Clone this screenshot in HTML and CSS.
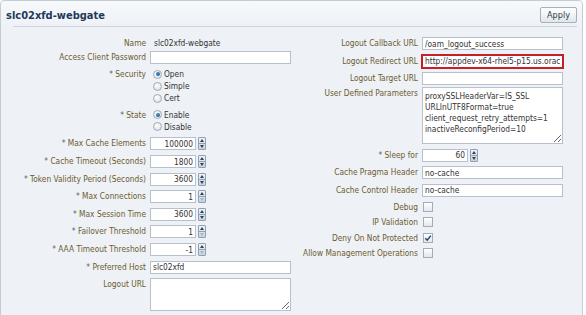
FILE: index.html
```html
<!DOCTYPE html>
<html lang="en">
<head>
  <meta charset="UTF-8" />
  <title>slc02xfd-webgate</title>
  <link rel="stylesheet" href="styles.css">
</head>
<body>

  <div class="panel">
    <div class="panel-head">
      <h1>slc02xfd-webgate</h1>
      <button class="btn">Apply</button>
    </div>
    <div class="head-rule"></div>

    <div class="panel-body">

      <!-- left column -->
      <div class="form">
        <label class="lbl short">Name</label>
        <div class="static short">slc02xfd-webgate</div>

        <label class="lbl">Access Client Password</label>
        <div><input class="txt" type="text"></div>

        <label class="lbl grp"><span class="req">*</span> Security</label>
        <div class="radios">
          <div class="opt"><span class="radio on"></span>Open</div>
          <div class="opt"><span class="radio"></span>Simple</div>
          <div class="opt"><span class="radio"></span>Cert</div>
        </div>

        <label class="lbl grp"><span class="req">*</span> State</label>
        <div class="radios">
          <div class="opt"><span class="radio on"></span>Enable</div>
          <div class="opt"><span class="radio"></span>Disable</div>
        </div>

        <label class="lbl"><span class="req">*</span> Max Cache Elements</label>
        <div class="num"><input class="txt n" type="text" value="100000"><span class="spin"><span class="up"></span><span class="dn"></span></span></div>

        <label class="lbl"><span class="req">*</span> Cache Timeout (Seconds)</label>
        <div class="num"><input class="txt n" type="text" value="1800"><span class="spin"><span class="up"></span><span class="dn"></span></span></div>

        <label class="lbl"><span class="req">*</span> Token Validity Period (Seconds)</label>
        <div class="num"><input class="txt n" type="text" value="3600"><span class="spin"><span class="up"></span><span class="dn"></span></span></div>

        <label class="lbl"><span class="req">*</span> Max Connections</label>
        <div class="num"><input class="txt n" type="text" value="1"><span class="spin"><span class="up"></span><span class="dn off"></span></span></div>

        <label class="lbl"><span class="req">*</span> Max Session Time</label>
        <div class="num"><input class="txt n" type="text" value="3600"><span class="spin"><span class="up"></span><span class="dn"></span></span></div>

        <label class="lbl"><span class="req">*</span> Failover Threshold</label>
        <div class="num"><input class="txt n" type="text" value="1"><span class="spin"><span class="up"></span><span class="dn off"></span></span></div>

        <label class="lbl"><span class="req">*</span> AAA Timeout Threshold</label>
        <div class="num"><input class="txt n" type="text" value="-1"><span class="spin"><span class="up"></span><span class="dn off"></span></span></div>

        <label class="lbl"><span class="req">*</span> Preferred Host</label>
        <div><input class="txt" type="text" value="slc02xfd"></div>

        <label class="lbl grp">Logout URL</label>
        <div><textarea class="area small"></textarea></div>
      </div>

      <!-- right column -->
      <div class="form right">
        <label class="lbl">Logout Callback URL</label>
        <div><input class="txt" type="text" value="/oam_logout_success"></div>

        <label class="lbl">Logout Redirect URL</label>
        <div><input class="txt err" type="text" value="http://appdev-x64-rhel5-p15.us.oracle.com:7777/oam/server/logout"></div>

        <label class="lbl">Logout Target URL</label>
        <div><input class="txt" type="text"></div>

        <label class="lbl grp tight">User Defined Parameters</label>
        <div class="tight"><textarea class="area big">proxySSLHeaderVar=IS_SSL
URLInUTF8Format=true
client_request_retry_attempts=1
inactiveReconfigPeriod=10</textarea></div>

        <label class="lbl"><span class="req">*</span> Sleep for</label>
        <div class="num"><input class="txt n" type="text" value="60"><span class="spin"><span class="up"></span><span class="dn"></span></span></div>

        <label class="lbl">Cache Pragma Header</label>
        <div><input class="txt" type="text" value="no-cache"></div>

        <label class="lbl">Cache Control Header</label>
        <div><input class="txt" type="text" value="no-cache"></div>

        <label class="lbl chk-row">Debug</label>
        <div class="chk-row"><span class="chk"></span></div>

        <label class="lbl chk-row">IP Validation</label>
        <div class="chk-row"><span class="chk"></span></div>

        <label class="lbl chk-row">Deny On Not Protected</label>
        <div class="chk-row"><span class="chk">
          <svg width="8" height="8" viewBox="0 0 8 8"><path d="M1.3 4.2 L3.2 6.2 L6.9 1.6" stroke="#24476f" stroke-width="1.5" fill="none"/></svg>
        </span></div>

        <label class="lbl chk-row">Allow Management Operations</label>
        <div class="chk-row"><span class="chk"></span></div>
      </div>

    </div>
  </div>

</body>
</html>
```

FILE: styles.css
```css
* { box-sizing: border-box; }
body {
  margin: 0;
  background: #fff;
  color: #333;
  font-family: "DejaVu Sans Condensed", "DejaVu Sans", "Liberation Sans", sans-serif;
  font-size: 8.3px;
  overflow: hidden;
}

/* panel frame */
.panel {
  width: 583px; min-height: 330px;
  border: 1px solid #c4cdd6;
  border-radius: 4px 4px 0 0;
  background: #eef2f6;
}
.panel-head {
  height: 25px;
  padding: 3px 5px 0 5px;
  display: flex; align-items: center; justify-content: space-between;
  background: linear-gradient(#f7f9fb, #eef2f6);
  border-radius: 4px 4px 0 0;
}
h1 {
  margin: 0;
  font-size: 11px; font-weight: bold;
  color: #1e3a5a;
}
.btn {
  width: 37px; height: 16px; padding: 0;
  font-family: inherit; font-size: 9px; color: #2d3b4b;
  border: 1px solid #a7b1bc; border-radius: 2px;
  background: linear-gradient(#ffffff, #e2e7ec);
}
.head-rule {
  height: 1px; margin: 0 5px 0 12px;
  background: #cdd4db;
}

/* form columns */
.panel-body {
  display: flex; align-items: flex-start; gap: 9px;
  padding: 9.5px 0 0 9px;
}
.form {
  display: grid;
  grid-template-columns: 136px 141px;
  column-gap: 4px; row-gap: 4.6px;
  align-items: start; align-content: start;
}
.form.right {
  grid-template-columns: 118px 141px;
  padding-top: 0.8px;
}
.lbl {
  text-align: right; white-space: nowrap;
  color: #6d5b2f;
  line-height: 13px;
}
.lbl.grp { line-height: 12px; }
.req { color: #4f6378; }
.short { margin-bottom: -3.4px; }
.static { line-height: 13px; padding-left: 4px; color: #333; }
.tight { margin-top: -2.6px; }

/* text inputs */
.txt {
  display: block;
  width: 141px; height: 13px; margin: 0;
  padding: 0 2px;
  border: 1px solid #b8c1cb;
  background: #fff;
  font-family: inherit; font-size: 8.3px; color: #333;
  outline: none;
}
.txt.err {
  border-color: #c71e28;
  box-shadow: 0 0 0 1px #c71e28;
}
.num { display: flex; gap: 1.5px; }
.txt.n { width: 46px; text-align: right; padding-right: 2px; }
.area {
  display: block;
  width: 141px; margin: 0;
  padding: 3px 2px;
  border: 1px solid #b8c1cb;
  background: #fff;
  font-family: inherit; font-size: 8.3px; line-height: 10.9px; color: #333;
  resize: both; overflow: hidden;
}
.area.small { height: 33px; }
.area.big { height: 56.7px; }

/* spinner */
.spin {
  width: 8px; height: 13px;
  border: 1px solid #8ea0b2; border-radius: 1px;
  background: linear-gradient(#f0f4f8, #c8d3de);
  display: flex; flex-direction: column;
}
.spin span {
  flex: 1;
  display: flex; align-items: center; justify-content: center;
}
.spin .up { border-bottom: 1px solid #8ea0b2; }
.spin .up::before {
  content: "";
  border-left: 2.5px solid transparent; border-right: 2.5px solid transparent;
  border-bottom: 3px solid #2f4256;
}
.spin .dn::before {
  content: "";
  border-left: 2.5px solid transparent; border-right: 2.5px solid transparent;
  border-top: 3px solid #2f4256;
}
.spin .dn.off::before { border-top-color: #a9b5c1; }

/* radios */
.opt {
  display: flex; align-items: center;
  height: 12px; color: #333;
}
.radio {
  position: relative;
  width: 9px; height: 9px;
  margin: 0 2px 0 3px;
  border: 1px solid #a1a9b2; border-radius: 50%;
  background: radial-gradient(circle at 40% 35%, #ffffff, #d5dbe1);
}
.radio.on::after {
  content: "";
  position: absolute; left: 1.5px; top: 1.5px;
  width: 4px; height: 4px; border-radius: 50%;
  background: radial-gradient(circle at 40% 35%, #4c8ec4, #14507f);
}

/* checkboxes */
.chk-row { height: 11px; line-height: 11px; }
.chk {
  display: flex; align-items: center; justify-content: center;
  width: 10px; height: 10px;
  margin-left: 1px;
  border: 1px solid #a4adb7;
  background: linear-gradient(#ffffff, #e3e7eb);
}
```
